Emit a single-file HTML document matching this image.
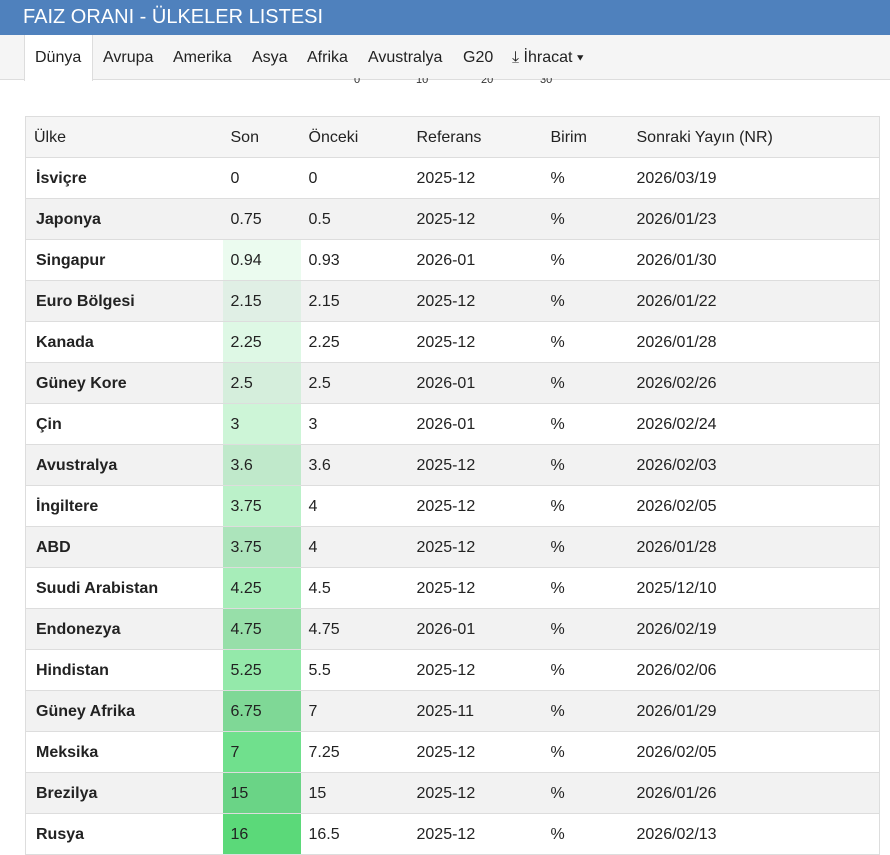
<!DOCTYPE html>
<html><head><meta charset="utf-8"><style>
body{margin:0;width:890px;height:855px;overflow:hidden;background:#fff;font-family:"Liberation Sans",Arial,sans-serif;color:#222;font-size:16px}
.top{height:35px;background:#4f81bd;color:#fff;font-size:20px;line-height:34px;padding-left:23px}
.tabs{position:absolute;top:35px;left:0;width:890px;height:45px;background:#f5f5f5;border-bottom:1px solid #ddd;box-sizing:border-box}
.tabs span{position:absolute;top:14px;font-size:16px}
.act{position:absolute;left:24px;top:0;width:69px;height:46px;background:#fff;border:1px solid #ddd;border-bottom:none;border-top:none;box-sizing:border-box}
.axis{position:absolute;top:78px;font-size:11px;color:#333;height:9px;overflow:hidden;line-height:4px}
table{position:absolute;top:116px;left:25px;width:855px;border-collapse:collapse;border:1px solid #ddd}
td,th{height:39px;border-top:1px solid #ddd;padding:1px 0 0 8px;text-align:left;font-weight:normal;font-size:16px}
th{background:#f5f5f5}
td:first-child{font-weight:bold;padding-left:10px}
tr:nth-child(odd) td{background:#f2f2f2}
</style></head><body>
<div class="top">FAIZ ORANI - ÜLKELER LISTESI</div>
<div class="tabs"><div class="act"></div>
<span style="left:35px">Dünya</span><span style="left:103px">Avrupa</span><span style="left:173px">Amerika</span><span style="left:252px">Asya</span><span style="left:307px">Afrika</span><span style="left:368px">Avustralya</span><span style="left:463px">G20</span><span style="left:512px">⤓ İhracat ▾</span></div>
<div class="axis" style="left:354px">0</div><div class="axis" style="left:416px">10</div><div class="axis" style="left:481px">20</div><div class="axis" style="left:540px">30</div>
<table>
<colgroup><col style="width:197px"><col style="width:78px"><col style="width:108px"><col style="width:134px"><col style="width:86px"><col></colgroup>
<tr><th style="padding-left:8px">Ülke</th><th>Son</th><th>Önceki</th><th>Referans</th><th>Birim</th><th>Sonraki Yayın (NR)</th></tr>
<tr><td>İsviçre</td><td>0</td><td>0</td><td>2025-12</td><td>%</td><td>2026/03/19</td></tr>
<tr><td>Japonya</td><td>0.75</td><td>0.5</td><td>2025-12</td><td>%</td><td>2026/01/23</td></tr>
<tr><td>Singapur</td><td style="background:rgba(60,215,100,.1)!important">0.94</td><td>0.93</td><td>2026-01</td><td>%</td><td>2026/01/30</td></tr>
<tr><td>Euro Bölgesi</td><td style="background:#e0efe5!important">2.15</td><td>2.15</td><td>2025-12</td><td>%</td><td>2026/01/22</td></tr>
<tr><td>Kanada</td><td style="background:rgba(60,215,100,.17)!important">2.25</td><td>2.25</td><td>2025-12</td><td>%</td><td>2026/01/28</td></tr>
<tr><td>Güney Kore</td><td style="background:#d5eedc!important">2.5</td><td>2.5</td><td>2026-01</td><td>%</td><td>2026/02/26</td></tr>
<tr><td>Çin</td><td style="background:rgba(60,215,100,.26)!important">3</td><td>3</td><td>2026-01</td><td>%</td><td>2026/02/24</td></tr>
<tr><td>Avustralya</td><td style="background:#c0e9cb!important">3.6</td><td>3.6</td><td>2025-12</td><td>%</td><td>2026/02/03</td></tr>
<tr><td>İngiltere</td><td style="background:rgba(60,215,100,.35)!important">3.75</td><td>4</td><td>2025-12</td><td>%</td><td>2026/02/05</td></tr>
<tr><td>ABD</td><td style="background:#ace4bb!important">3.75</td><td>4</td><td>2025-12</td><td>%</td><td>2026/01/28</td></tr>
<tr><td>Suudi Arabistan</td><td style="background:rgba(60,215,100,.45)!important">4.25</td><td>4.5</td><td>2025-12</td><td>%</td><td>2025/12/10</td></tr>
<tr><td>Endonezya</td><td style="background:#97dfa9!important">4.75</td><td>4.75</td><td>2026-01</td><td>%</td><td>2026/02/19</td></tr>
<tr><td>Hindistan</td><td style="background:rgba(60,215,100,.55)!important">5.25</td><td>5.5</td><td>2025-12</td><td>%</td><td>2026/02/06</td></tr>
<tr><td>Güney Afrika</td><td style="background:#7fd896!important">6.75</td><td>7</td><td>2025-11</td><td>%</td><td>2026/01/29</td></tr>
<tr><td>Meksika</td><td style="background:#70e08d!important">7</td><td>7.25</td><td>2025-12</td><td>%</td><td>2026/02/05</td></tr>
<tr><td>Brezilya</td><td style="background:#6ad486!important">15</td><td>15</td><td>2025-12</td><td>%</td><td>2026/01/26</td></tr>
<tr><td>Rusya</td><td style="background:#5bd979!important">16</td><td>16.5</td><td>2025-12</td><td>%</td><td>2026/02/13</td></tr>
</table>
</body></html>
